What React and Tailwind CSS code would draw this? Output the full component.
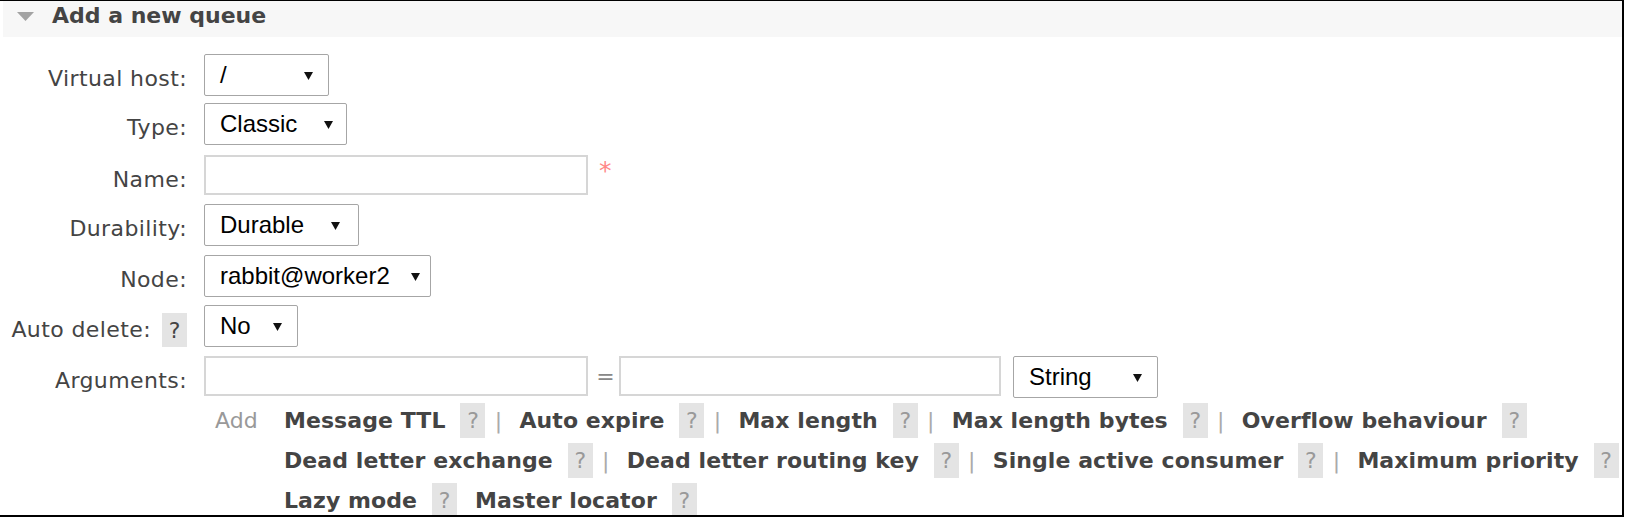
import React from "react";

const verdana = "font-['DejaVu_Sans',Verdana,sans-serif]";
const arial = "font-['Liberation_Sans',Arial,sans-serif]";

function Arrow() {
  return (
    <svg width="9" height="9" viewBox="0 0 9 9" className="shrink-0">
      <path d="M0 1h9L4.5 9z" fill="#111" />
    </svg>
  );
}

function Select({ value, width, pad }) {
  return (
    <div
      className={`${width} ${pad} h-[42px] flex items-center justify-between pl-[15px] border border-[#a6a6a6] rounded-[2px] bg-white ${arial} text-[24px] leading-none text-black whitespace-nowrap`}
    >
      <span>{value}</span>
      <Arrow />
    </div>
  );
}

function TextInput({ width }) {
  return <div className={`${width} h-[40px] border-2 border-[#d6d6d6] bg-white`} />;
}

function Help({ dark }) {
  return (
    <span
      className={`w-[25px] h-[35px] shrink-0 flex items-center justify-center bg-[#e4e4e4] ${dark ? "text-[#444]" : "text-[#999]"}`}
    >
      ?
    </span>
  );
}

function Row({ label, h, extra, children }) {
  return (
    <div className={`flex items-start ${h}`}>
      <div className="w-[187px] shrink-0 flex justify-end items-start">
        <span className="pt-[12px] leading-[26px] tracking-[0.4px] whitespace-nowrap">{label}</span>
        {extra}
      </div>
      <div className="ml-[17px] flex items-start">{children}</div>
    </div>
  );
}

const argRows = [
  [
    ["Message TTL", true],
    ["Auto expire", true],
    ["Max length", true],
    ["Max length bytes", true],
    ["Overflow behaviour", false],
  ],
  [
    ["Dead letter exchange", true],
    ["Dead letter routing key", true],
    ["Single active consumer", true],
    ["Maximum priority", false],
  ],
  [
    ["Lazy mode", false],
    ["Master locator", false],
  ],
];

function ArgLinks({ items }) {
  return items.map(([text, sep], i) => (
    <div key={text} className={`flex items-center ${!sep && i < items.length - 1 ? "mr-[18px]" : ""}`}>
      <span className="font-bold tracking-[0.07px] text-[#444] whitespace-nowrap">{text}</span>
      <span className="ml-[15px]">
        <Help />
      </span>
      {sep && <span className="w-[10px] ml-[8px] mr-[16px] text-center text-[#aaa]">|</span>}
    </div>
  ));
}

export default function App() {
  return (
    <div className={`w-[1626px] h-[524px] bg-white overflow-hidden ${verdana} text-[22px] text-[#444]`}>
      <div className="w-[1624px] h-[517px] border-t border-r-2 border-b-2 border-black overflow-hidden">
        <div className="ml-[3px] h-[36px] bg-[#f7f7f7] flex items-start">
          <svg className="ml-[14px] mt-[11px] shrink-0" width="17" height="9" viewBox="0 0 17 9">
            <path d="M0 0h17L8.5 9z" fill="#a3a3a3" />
          </svg>
          <span className="ml-[18px] pt-[2px] leading-[26px] font-bold text-[#444]">Add a new queue</span>
        </div>

        <div className="pt-[17px]">
          <Row label="Virtual host:" h="h-[49px]">
            <Select value="/" width="w-[125px]" pad="pr-[15px]" />
          </Row>
          <Row label="Type:" h="h-[52px]">
            <Select value="Classic" width="w-[143px]" pad="pr-[13px]" />
          </Row>
          <Row label="Name:" h="h-[49px]">
            <TextInput width="w-[384px]" />
            <span className="ml-[11px] mt-[3px] text-[25px] leading-[26px] text-[#f88]">*</span>
          </Row>
          <Row label="Durability:" h="h-[51px]">
            <Select value="Durable" width="w-[155px]" pad="pr-[18px]" />
          </Row>
          <Row label="Node:" h="h-[50px]">
            <Select value="rabbit@worker2" width="w-[227px]" pad="pr-[10px]" />
          </Row>
          <Row
            label="Auto delete:"
            h="h-[51px]"
            extra={
              <span className="ml-[11px] mt-[8px] w-[25px] h-[34px] flex items-center justify-center bg-[#e4e4e4] text-[#444]">
                ?
              </span>
            }
          >
            <Select value="No" width="w-[94px]" pad="pr-[15px]" />
          </Row>
          <Row label="Arguments:" h="h-[44px]">
            <TextInput width="w-[384px]" />
            <span className="w-[31px] h-[40px] flex items-center justify-center pl-[4px] text-[#888]">=</span>
            <TextInput width="w-[382px]" />
            <div className="ml-[12px]">
              <Select value="String" width="w-[145px]" pad="pr-[15px]" />
            </div>
          </Row>

          <div className="ml-[215px]">
            <div className="h-[40px] flex items-center">
              <span className="w-[69px] shrink-0 text-[#999]">Add</span>
              <ArgLinks items={argRows[0]} />
            </div>
            <div className="h-[40px] flex items-center ml-[69px]">
              <ArgLinks items={argRows[1]} />
            </div>
            <div className="h-[40px] flex items-center ml-[69px]">
              <ArgLinks items={argRows[2]} />
            </div>
          </div>
        </div>
      </div>
    </div>
  );
}
